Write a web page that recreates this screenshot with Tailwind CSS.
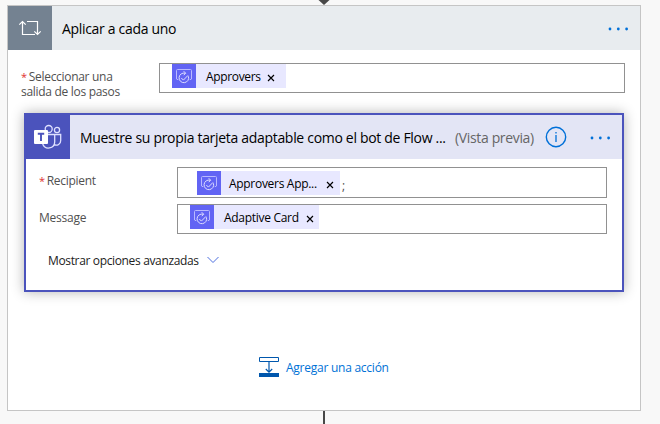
<!DOCTYPE html>
<html lang="es">
<head>
<meta charset="utf-8">
<title>Aplicar a cada uno</title>
<script src="https://cdn.jsdelivr.net/npm/@tailwindcss/browser@4"></script>
</head>
<body class="relative h-[424px] w-[660px] overflow-hidden bg-[#f8f8f8] px-[7px] pt-[5px] font-['Open_Sans','Noto_Sans',sans-serif] text-[12px] text-black">
<svg class="hidden">
  <symbol id="approval" viewBox="0 0 24 24">
    <path d="M6.200 15.500H5L4.500 15V6.500Q4.500 5.500 5.500 5.500H18.500Q19.500 5.500 19.500 6.500V15L19 15.500H17.800" fill="none" stroke="#b9b9ff" stroke-width="1"/>
    <path d="M13.300 9.300A4.800 4.800 0 1 0 16.400 12.300M11.700 7.200l2 2-2 2M9.300 14l2.100 2.100 4.600-4.700" fill="none" stroke="#dedeff" stroke-width="1"/>
  </symbol>
  <symbol id="dots" viewBox="0 0 22 4"><circle cx="2" cy="2" r="1.400"/><circle cx="10.300" cy="2" r="1.400"/><circle cx="18.600" cy="2" r="1.400"/></symbol>
  <symbol id="close" viewBox="0 0 8 8"><path d="M1 1l6 6M7 1L1 7" fill="none" stroke="currentColor" stroke-width="1.150"/></symbol>
</svg>
<svg class="absolute left-[317px] top-0" width="14" height="5"><path d="M1.500 0h11L7 5z" fill="#484848"/></svg>
<div class="absolute left-[323px] top-[411px] h-[13px] w-[2px] bg-[#484848]"></div>

<main class="flex h-[406px] w-[634px] flex-col border border-[#c5c5c5] bg-white">
  <header class="flex h-[44px] shrink-0 items-center bg-[#e8ecef]">
    <div class="flex size-[44px] items-center justify-center bg-[#748291]">
      <svg width="24" height="18" viewBox="0 0 24 18" fill="none" stroke="#fff" stroke-width="1.200"><path d="M4.500 2.500v13H17M1.300 5.700l3.200-3.200 3.200 3.200M9 2.500h10.500v13M16.300 12.300l3.200 3.200 3.200-3.200"/></svg>
    </div>
    <h1 class="ml-[10px] whitespace-nowrap text-[14px] tracking-[-0.32px]">Aplicar a cada uno</h1>
    <svg class="ml-auto mr-[10px] mt-[1px] fill-[#0070d8]" width="22" height="4"><use href="#dots"/></svg>
  </header>

  <div class="mt-[13px] flex h-[30px] shrink-0">
    <div class="w-[151px] pl-[13px] pt-[6px] leading-[15px] tracking-[-0.3px] whitespace-nowrap text-[#505050]"><span class="mr-[2px] text-[11px] text-[#e03030]">*</span>Seleccionar una<br>salida de los pasos</div>
    <div class="h-[30px] w-[466px] border border-[#919191] pl-[12px]">
      <div class="flex h-[24px] w-[114px] items-center bg-[#e8e8ff]">
        <svg class="bg-[#6264f4]" width="24" height="24"><use href="#approval"/></svg>
        <span class="ml-[10px] mt-[2px] tracking-[-0.35px]">Approvers</span>
        <svg class="ml-auto mr-[11px] mt-[4px]" width="8" height="8"><use href="#close"/></svg>
      </div>
    </div>
  </div>

  <section class="ml-[16px] mt-[20px] h-[179px] w-[600px] shrink-0 border-2 border-[#4b53bc] bg-white shadow-[0_0_12px_rgba(0,0,0,0.3)]">
    <header class="flex h-[44px] items-center bg-[#e3e5f5]">
      <div class="flex size-[44px] items-center justify-center bg-[#4b53bc]">
        <svg width="28" height="26" viewBox="0 0 28 26" fill="none" stroke="#dfe1ff" stroke-width="1.300">
          <circle cx="14.700" cy="5" r="3.500"/><circle cx="23" cy="6" r="2.600"/>
          <path d="M14 10.500h6.700v7.500a6.200 6.200 0 0 1-12 2M20.700 10.500h6v6a4.500 4.500 0 0 1-6.500 4.200"/>
          <rect x="0" y="6" width="14" height="14" rx="1" fill="#fff" stroke="none"/>
          <path d="M3.800 9.800h6.400M7 9.800v7.200" stroke="#4b53bc" stroke-width="1.900"/>
        </svg>
      </div>
      <h2 class="ml-[10px] w-[375px] whitespace-nowrap text-[14px] tracking-[-0.31px]">Muestre su propia tarjeta adaptable como el bot de Flow ...</h2>
      <span class="whitespace-nowrap text-[14px] tracking-[-0.35px] text-[#666]">(Vista previa)</span>
      <svg class="ml-auto" width="22" height="22" fill="none" stroke="#0070d8"><circle cx="11" cy="11" r="9.700" stroke-width="1.400"/><path d="M11 9v7M11 6v1.500" stroke-width="1.300"/></svg>
      <svg class="ml-[23px] mr-[10px] mt-[2px] fill-[#0070d8]" width="22" height="4"><use href="#dots"/></svg>
    </header>

    <div class="mt-[8px] flex h-[31px]">
      <div class="w-[151px] pl-[13px] pt-[5px] leading-[18px] tracking-[-0.3px] text-[#505050]"><span class="mr-[2px] text-[11px] text-[#e03030]">*</span>Recipient</div>
      <div class="flex w-[430px] items-start border border-[#919191] pl-[19px] pt-[3px]">
        <div class="flex h-[24px] w-[143px] items-center bg-[#e8e8ff]">
          <svg class="bg-[#6264f4]" width="24" height="24"><use href="#approval"/></svg>
          <span class="ml-[8px] mt-[2px] whitespace-nowrap tracking-[-0.3px]">Approvers App...</span>
          <svg class="ml-auto mr-[6px] mt-[3px]" width="8" height="8"><use href="#close"/></svg>
        </div>
        <span class="ml-[2px] mt-[6px] text-[#505050]">;</span>
      </div>
    </div>

    <div class="mt-[6px] flex h-[30px]">
      <div class="w-[151px] pl-[13px] pt-[5px] leading-[18px] tracking-[-0.25px] text-[#505050]">Message</div>
      <div class="w-[430px] border border-[#919191] pl-[12px]">
        <div class="flex h-[24px] w-[129px] items-center bg-[#e8e8ff]">
          <svg class="bg-[#6264f4]" width="24" height="24"><use href="#approval"/></svg>
          <span class="ml-[10px] mt-[2px] whitespace-nowrap tracking-[-0.3px]">Adaptive Card</span>
          <svg class="ml-auto mr-[5px] mt-[3px]" width="8" height="8"><use href="#close"/></svg>
        </div>
      </div>
    </div>

    <div class="ml-[22px] mt-[18px] flex h-[18px] items-center text-[#222]">
      <span class="w-[159px] whitespace-nowrap tracking-[-0.35px]">Mostrar opciones avanzadas</span>
      <svg class="-mt-[2px]" width="12" height="8" fill="none" stroke="#4d6fdf"><path d="M.5 1l5.500 5.500L11.500 1"/></svg>
    </div>
  </section>

  <div class="ml-[251px] mt-[65px] flex h-[20px] items-center text-[#0072d6]">
    <svg width="20" height="20" fill="none" stroke="#0057ad"><path d="M.5.500h19v4H.5z"/><path d="M10 5v10M6.800 12l3.200 3.200 3.200-3.200" stroke-width="1.200"/><path d="M0 18h20" stroke-width="4"/></svg>
    <span class="ml-[7px] mt-[2px] whitespace-nowrap tracking-[-0.25px]">Agregar una acción</span>
  </div>
</main>
</body>
</html>
